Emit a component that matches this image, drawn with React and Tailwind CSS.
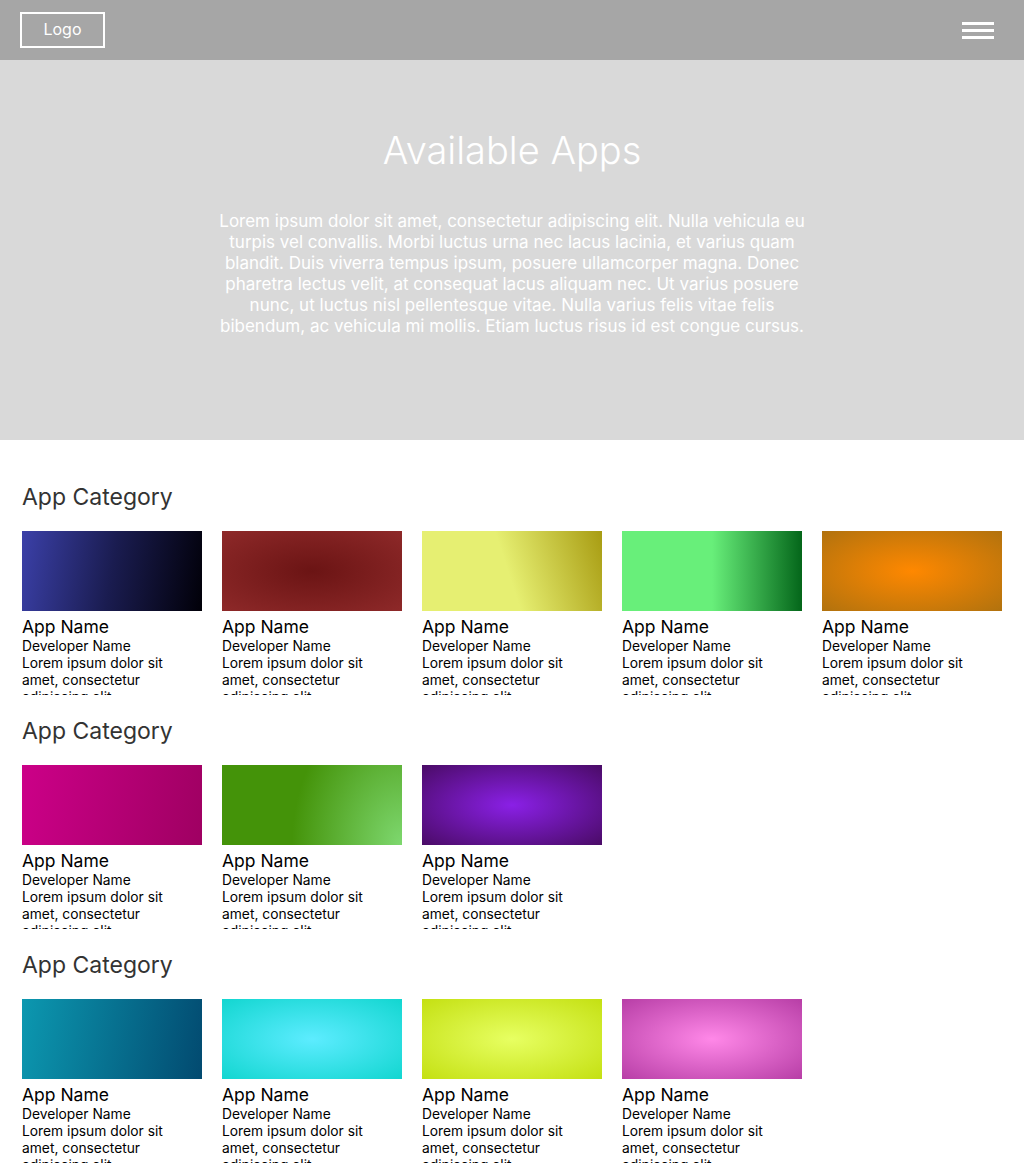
import React from "react";

const lorem =
  "Lorem ipsum dolor sit amet, consectetur adipiscing elit. Nulla vehicula eu turpis vel convallis. Morbi luctus urna nec lacus lacinia, et varius quam blandit. Duis viverra tempus ipsum, posuere ullamcorper magna. Donec pharetra lectus velit, at consequat lacus aliquam nec. Ut varius posuere nunc, ut luctus nisl pellentesque vitae. Nulla varius felis vitae felis bibendum, ac vehicula mi mollis. Etiam luctus risus id est congue cursus.";

const categories = [
  [
    "bg-[linear-gradient(100deg,#3b40a8_0%,#1a1c50_50%,#010008_100%)]",
    "bg-[radial-gradient(ellipse_at_center,#6b1414_0%,#8e2929_100%)]",
    "bg-[linear-gradient(72deg,#e6ef72_48%,#a89c12_100%)]",
    "bg-[linear-gradient(90deg,#68ef7a_50%,#04661a_100%)]",
    "bg-[radial-gradient(ellipse_at_center,#ff8800_0%,#b1720e_100%)]",
  ],
  [
    "bg-[linear-gradient(100deg,#cc0088_0%,#9f0062_100%)]",
    "bg-[radial-gradient(ellipse_110px_150px_at_100%_100%,#7ed86f_0%,#449309_100%)]",
    "bg-[radial-gradient(ellipse_at_center,#8a20e6_0%,#4a0b66_100%)]",
  ],
  [
    "bg-[linear-gradient(100deg,#0c98b0_0%,#024a70_100%)]",
    "bg-[radial-gradient(ellipse_at_center,#5decff_0%,#12d6d0_100%)]",
    "bg-[radial-gradient(ellipse_at_center,#e7ff62_0%,#c4e012_100%)]",
    "bg-[radial-gradient(ellipse_at_center,#ff88e8_0%,#b73ea6_100%)]",
  ],
];

function AppCard({ bg }) {
  return (
    <div className="w-[180px]">
      <div className={`h-[80px] w-full ${bg}`} />
      <div className="h-[84px] overflow-hidden text-black">
        <div className="mt-[5px] text-[17.5px] leading-[22px]">App Name</div>
        <div className="text-[13.8px] leading-[17px]">Developer Name</div>
        <p className="text-[13.8px] leading-[17px]">
          Lorem ipsum dolor sit amet, consectetur adipiscing elit.
        </p>
      </div>
    </div>
  );
}

export default function App() {
  return (
    <div className="min-h-screen bg-white font-['Inter','Liberation_Sans',sans-serif]">
      <header className="h-[60px] bg-[#a6a6a6] flex items-center justify-between px-5">
        <div className="w-[85px] h-[36px] border-2 border-white flex items-center justify-center pb-[3px] text-white text-[16px]">
          Logo
        </div>
        <div className="flex flex-col gap-[4px] mr-[10px]">
          <span className="block w-[32px] h-[3px] bg-white" />
          <span className="block w-[32px] h-[3px] bg-white" />
          <span className="block w-[32px] h-[3px] bg-white" />
        </div>
      </header>

      <section className="h-[380px] bg-[#d9d9d9] pt-[66px] text-white text-center">
        <h1 className="text-[38px] leading-[48px] font-light">Available Apps</h1>
        <p className="mx-auto mt-[37px] max-w-[600px] text-[17px] leading-[21px]">
          {lorem}
        </p>
      </section>

      <main className="px-[22px] pt-[43px] flex flex-col gap-[22px]">
        {categories.map((row, i) => (
          <section key={i}>
            <h2 className="text-[23px] leading-[29px] text-[#333333] mb-[19px]">
              App Category
            </h2>
            <div className="flex gap-5">
              {row.map((bg, j) => (
                <AppCard key={j} bg={bg} />
              ))}
            </div>
          </section>
        ))}
      </main>
    </div>
  );
}
